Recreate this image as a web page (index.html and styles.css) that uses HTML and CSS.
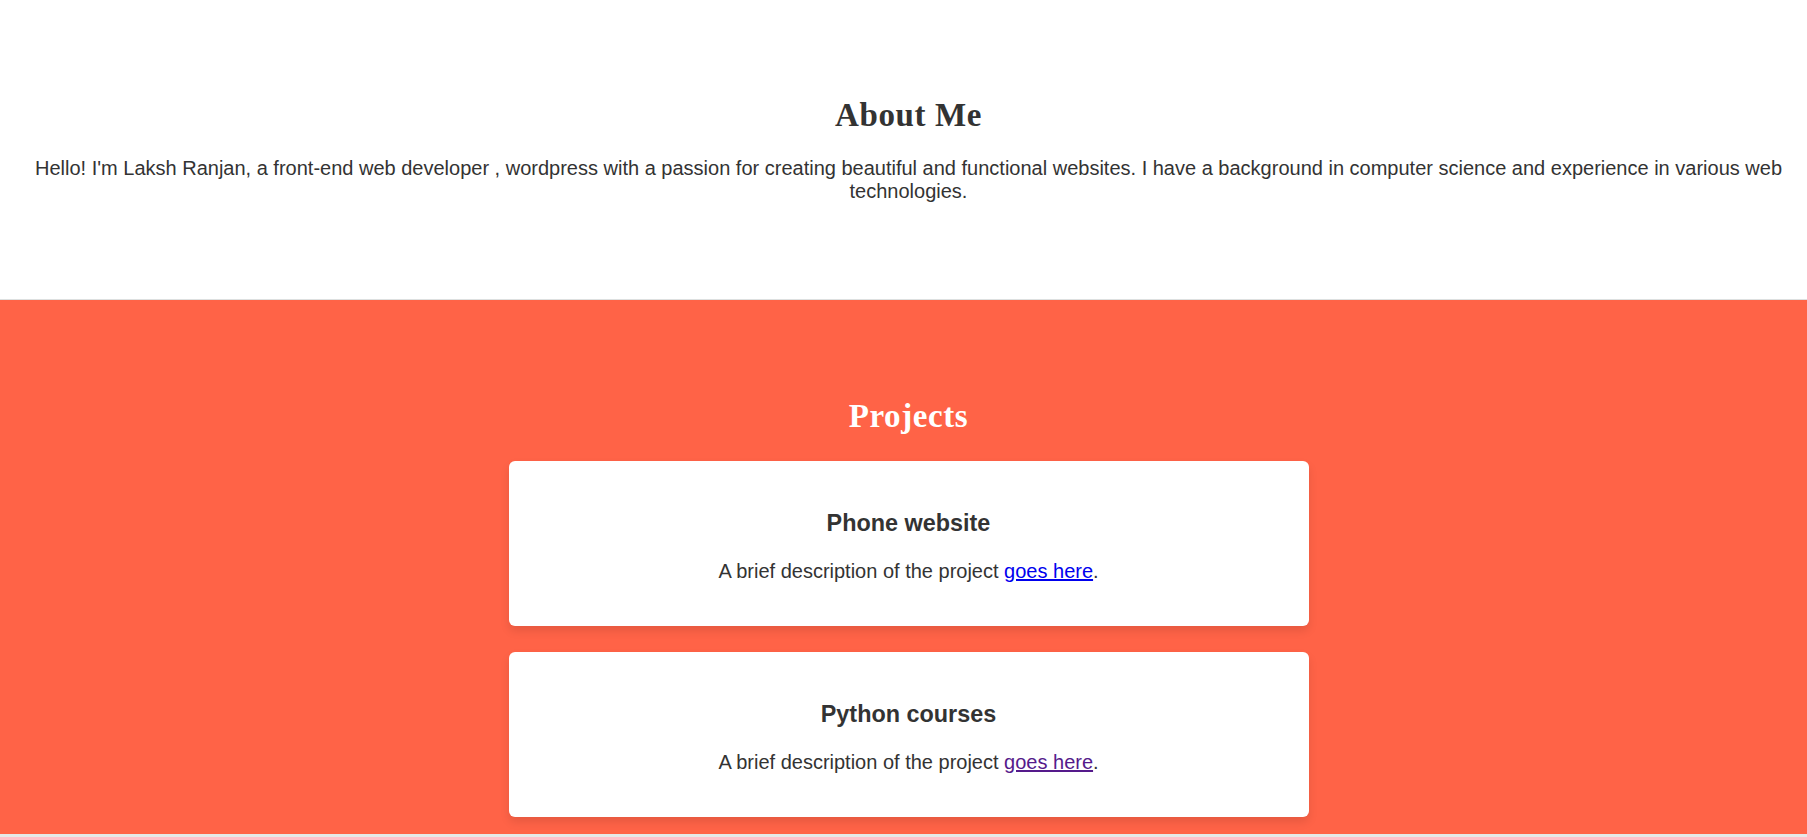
FILE: index.html
```html
<!DOCTYPE html>
<html lang="en">
<head>
<meta charset="utf-8">
<title>Laksh Ranjan</title>
<link rel="stylesheet" href="styles.css">
</head>
<body>
<section class="about">
  <h2 class="section-title">About Me</h2>
  <p class="about-text">Hello! I'm Laksh Ranjan, a front-end web developer , wordpress with a passion for creating beautiful and functional websites. I have a background in computer science and experience in various web technologies.</p>
</section>
<section class="projects">
  <h2 class="section-title light">Projects</h2>
  <div class="card">
    <h3 class="card-title">Phone website</h3>
    <p class="card-text">A brief description of the project <a class="link" href="#">goes here</a>.</p>
  </div>
  <div class="card">
    <h3 class="card-title">Python courses</h3>
    <p class="card-text">A brief description of the project <a class="link visited" href="#">goes here</a>.</p>
  </div>
</section>
<footer class="footer"></footer>
</body>
</html>
```
FILE: styles.css
```css
html, body {
  margin: 0;
  padding: 0;
}
body {
  font-family: "Liberation Sans", Arial, sans-serif;
  font-size: 20px;
  color: #333;
  background: #fff;
}
.about {
  background: #fff;
  padding: 73px 20px 76px 30px;
  text-align: center;
  border-bottom: 1px solid #dde0e0;
}
.section-title {
  font-family: "Liberation Serif", "Times New Roman", serif;
  font-weight: bold;
  font-size: 33px;
  letter-spacing: 0.6px;
  line-height: 34px;
  margin: 25px 0;
  color: #333;
}
.section-title.light {
  color: #fff;
  margin-bottom: 28px;
}
.about-text {
  margin: 0 0 20px;
  line-height: 23px;
}
.projects {
  background: #ff6347;
  padding: 74px 20px 17px 30px;
  text-align: center;
}
.card {
  width: 800px;
  box-sizing: border-box;
  margin: 0 auto 26px;
  background: #fff;
  border-radius: 6px;
  padding: 24px;
  box-shadow: 0 5px 10px rgba(0, 0, 0, 0.1);
}
.card:last-child {
  margin-bottom: 0;
}
.card-title {
  font-size: 23.4px;
  font-weight: bold;
  margin: 24.6px 0 23.4px;
  line-height: 27px;
}
.card-text {
  margin: 0;
  padding-bottom: 19px;
  line-height: 23px;
}
.link {
  color: #0000ee;
  text-decoration: underline;
}
.link.visited {
  color: #551a8b;
}
.footer {
  background: #e6e8e8;
  height: 40px;
}
```
